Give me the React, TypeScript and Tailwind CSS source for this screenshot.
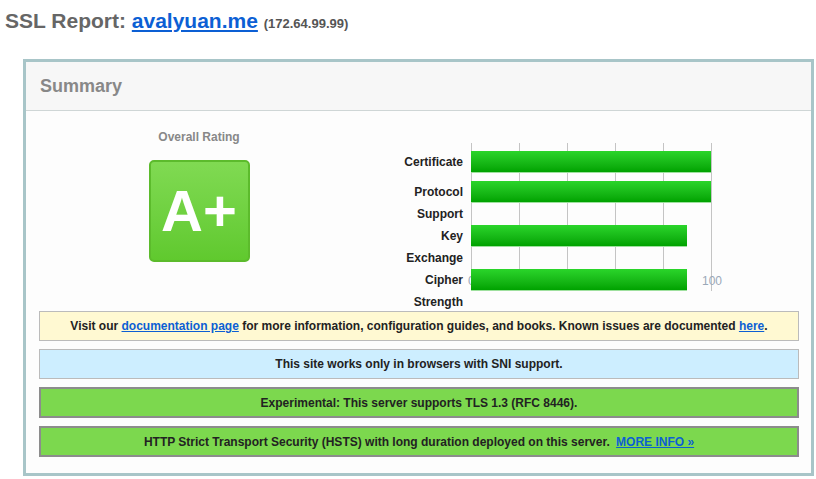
import React from "react";

interface Score {
  label: string[];
  value: number;
}

const scores: Score[] = [
  { label: ["Certificate"], value: 100 },
  { label: ["Protocol", "Support"], value: 100 },
  { label: ["Key", "Exchange"], value: 90 },
  { label: ["Cipher", "Strength"], value: 90 },
];

const gridLines = [0, 48, 96, 144, 192, 240];

function ScoreChart() {
  return (
    <div className="flex pt-[40px]">
      <div className="w-[112px] pr-[8px] text-right text-[12px] font-bold leading-[22px] text-[#222]">
        {scores.map((s, i) => (
          <div key={s.label[0]} className={i === 0 ? "mb-[8px]" : ""}>
            {s.label.map((l) => (
              <div key={l}>{l}</div>
            ))}
          </div>
        ))}
      </div>
      <div className="relative w-[240px]">
        {/* grid */}
        {gridLines.map((x) => (
          <div
            key={x}
            className="absolute top-[-8px] h-[148px] w-px bg-[#c4c4c4]"
            style={{ left: x }}
          />
        ))}
        <span className="absolute left-[-3px] top-[119px] text-[12px] leading-[22px] text-[#9aa8b8]">0</span>
        <span className="absolute left-[231px] top-[119px] text-[12px] leading-[22px] text-[#9aa8b8]">100</span>
        {scores.map((s, i) => (
          <div key={s.label[0]} className={i === 0 ? "h-[30px]" : "h-[44px]"}>
            <div
              className="relative h-[22px] border-b border-[#9ee09e] bg-gradient-to-b from-[#2ad52a] to-[#00a200]"
              style={{ width: (s.value / 100) * 240 }}
            />
          </div>
        ))}
      </div>
    </div>
  );
}

export default function App() {
  return (
    <div className="min-h-[479px] bg-white font-['Liberation_Sans',Arial,sans-serif]">
      <div className="px-[5px] pt-[8px]">
        <h1 className="text-[21px] font-bold leading-[26px] text-[#666]">
          SSL Report:{" "}
          <a href="#" className="text-[#0c5fd4] underline">
            avalyuan.me
          </a>{" "}
          <span className="text-[13px] text-[#555]">(172.64.99.99)</span>
        </h1>
      </div>

      <div className="ml-[23px] mt-[22px] w-[791px] border-[3px] border-[#a8c5c8]">
        <div className="h-[49px] border-b border-[#cfd6d6] bg-[#f7f7f7] pl-[14px] pt-[13px] text-[18px] font-bold leading-[22px] text-[#888]">
          Summary
        </div>

        <div className="bg-[#fdfdfd] pb-[16px] pl-[13px] pr-[12px]">
          <div className="flex h-[200px]">
            <div className="flex w-[320px] flex-col items-center pt-[19px]">
              <div className="text-[12px] font-bold leading-[14px] text-[#888]">Overall Rating</div>
              <div className="mt-[16px] flex h-[102px] w-[101px] items-center justify-center rounded-[5px] border-2 border-[#5cbb2c] bg-gradient-to-b from-[#80da52] to-[#60c92e] text-[58px] font-bold leading-none text-white">
                A+
              </div>
            </div>
            <ScoreChart />
          </div>

          <div className="flex flex-col gap-[8px] text-center text-[12px] font-bold text-[#222]">
            <div className="flex h-[30px] items-center justify-center border border-[#bbb] bg-[#fff9d2]">
              <span>
                Visit our{" "}
                <a href="#" className="text-[#0c5fd4] underline">
                  documentation page
                </a>{" "}
                for more information, configuration guides, and books. Known issues are documented{" "}
                <a href="#" className="text-[#0c5fd4] underline">
                  here
                </a>
                .
              </span>
            </div>
            <div className="flex h-[30px] items-center justify-center border border-[#bbb] bg-[#cdeeff]">
              This site works only in browsers with SNI support.
            </div>
            <div className="flex h-[31px] items-center justify-center border-2 border-[#8c8c8c] bg-[#7cd84e]">
              Experimental: This server supports TLS 1.3 (RFC 8446).
            </div>
            <div className="flex h-[31px] items-center justify-center border-2 border-[#8c8c8c] bg-[#7cd84e]">
              <span>
                HTTP Strict Transport Security (HSTS) with long duration deployed on this server.{" "}
                <a href="#" className="ml-[3px] text-[#0c5fd4] underline">
                  MORE INFO »
                </a>
              </span>
            </div>
          </div>
        </div>
      </div>
    </div>
  );
}
